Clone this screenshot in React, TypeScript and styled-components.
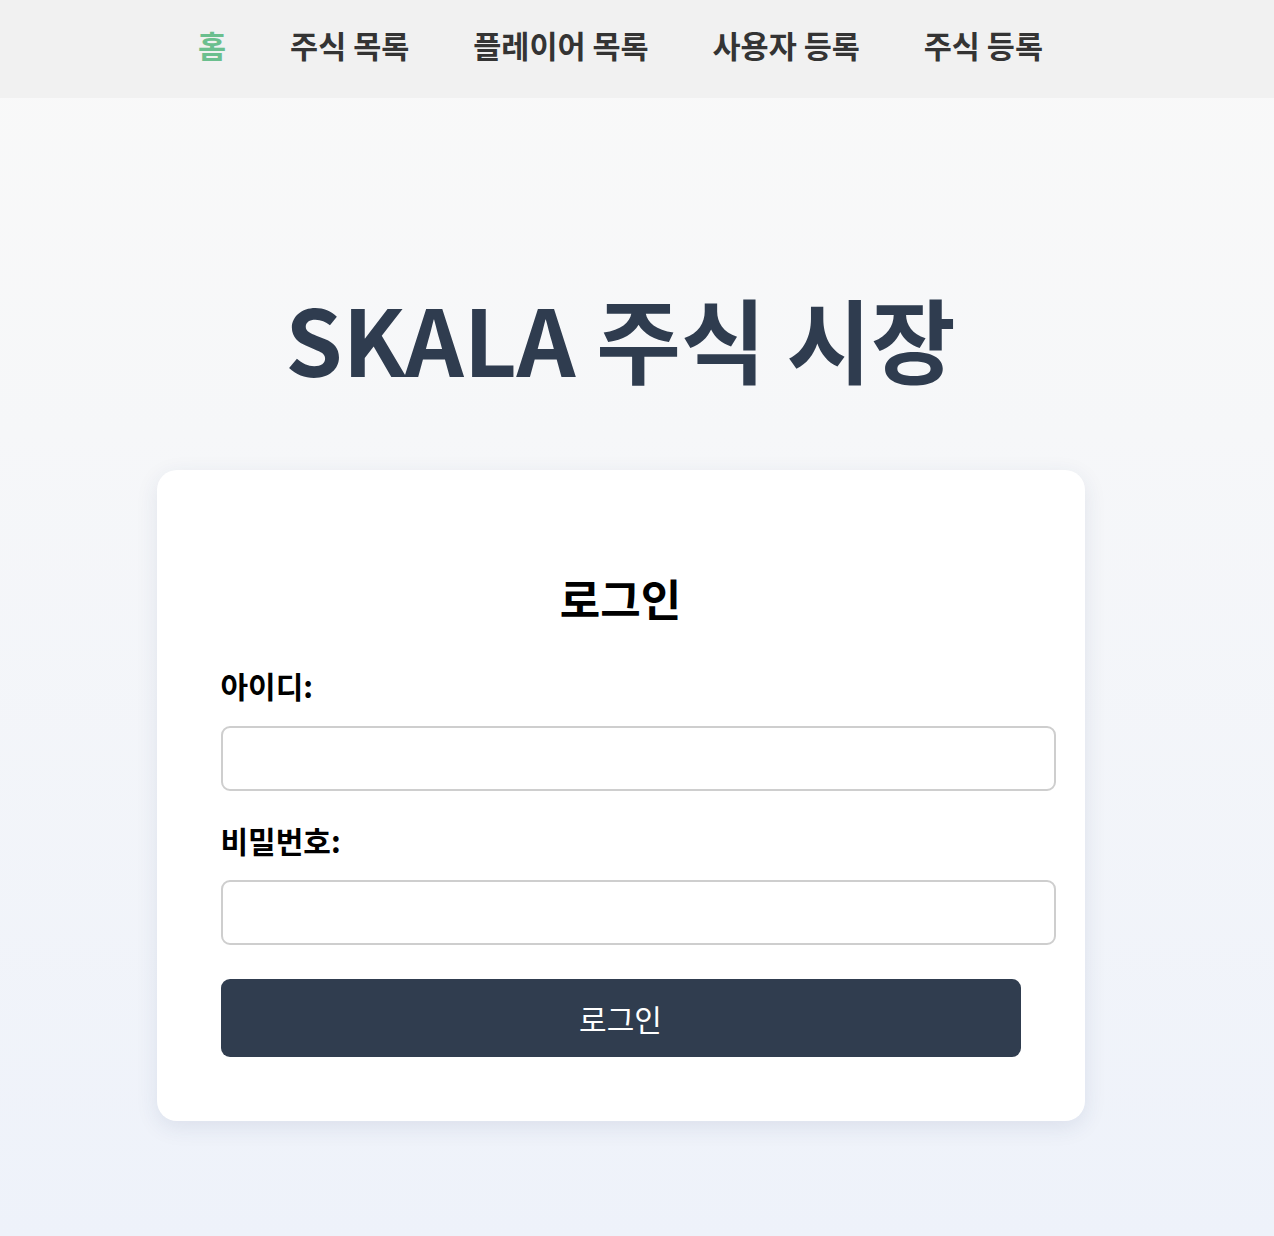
import React from "react";
import styled, { createGlobalStyle } from "styled-components";

const GlobalStyle = createGlobalStyle`
  html, body {
    margin: 0;
    padding: 0;
  }
  body {
    font-family: "Noto Sans CJK KR", "Noto Sans", sans-serif;
    background: linear-gradient(to bottom, #f9f9f9 0%, #f6f7f9 35%, #eef2fa 100%);
    min-height: 1236px;
  }
  * {
    font-family: "Noto Sans CJK KR", "Noto Sans", sans-serif;
  }
`;

const Page = styled.div`
  min-height: 1236px;
  display: flex;
  flex-direction: column;
`;

const NavBar = styled.nav`
  height: 98px;
  background: #f1f1f1;
  display: flex;
  align-items: center;
  justify-content: center;
  gap: 64px;
  padding-right: 33px;
  padding-bottom: 8px;
  box-sizing: border-box;
`;

const NavLink = styled.a<{ $active?: boolean }>`
  font-size: 30.5px;
  font-weight: 700;
  color: ${(p) => (p.$active ? "#6bbf8e" : "#343434")};
  text-decoration: none;
  cursor: pointer;
  line-height: 1.45;
`;

const Main = styled.main`
  display: flex;
  flex-direction: column;
  align-items: center;
  padding-right: 33px;
  padding-top: 172px;
`;

const Title = styled.h1`
  margin: 0 0 67px;
  font-size: 92px;
  font-weight: 700;
  color: #2f3c4f;
  line-height: 1.45;
`;

const Card = styled.div`
  width: 928px;
  box-sizing: border-box;
  background: #ffffff;
  border-radius: 20px;
  padding: 64px;
  box-shadow: 0 6px 22px rgba(40, 60, 110, 0.1);
`;

const CardTitle = styled.h2`
  margin: 33px 0 33px;
  text-align: center;
  font-size: 44px;
  font-weight: 700;
  color: #000;
  line-height: 1.45;
`;

const FormGroup = styled.div<{ $last?: boolean }>`
  margin-bottom: ${(p) => (p.$last ? "0" : "28px")};
`;

const Label = styled.label`
  display: block;
  font-size: 30px;
  font-weight: 700;
  color: #000;
  line-height: 1.45;
  margin-bottom: 18px;
`;

const Input = styled.input`
  display: block;
  box-sizing: content-box;
  width: 100%;
  height: 29px;
  padding: 16px 15.5px;
  border: 2px solid #cecece;
  border-radius: 9px;
  background: #fff;
  font-size: 20px;
  outline: none;
`;

const SubmitButton = styled.button`
  display: block;
  width: 100%;
  height: 78px;
  margin-top: 34px;
  border: none;
  border-radius: 9px;
  background: #303d4f;
  color: #ffffff;
  font-size: 30px;
  font-weight: 400;
  cursor: pointer;
`;

const Form = styled.form`
  display: block;
`;

export default function App() {
  const links = ["홈", "주식 목록", "플레이어 목록", "사용자 등록", "주식 등록"];
  return (
    <>
      <GlobalStyle />
      <Page>
        <NavBar>
          {links.map((l, i) => (
            <NavLink key={l} $active={i === 0}>
              {l}
            </NavLink>
          ))}
        </NavBar>
        <Main>
          <Title>SKALA 주식 시장</Title>
          <Card>
            <CardTitle>로그인</CardTitle>
            <Form onSubmit={(e) => e.preventDefault()}>
              <FormGroup>
                <Label htmlFor="userId">아이디:</Label>
                <Input id="userId" type="text" />
              </FormGroup>
              <FormGroup $last>
                <Label htmlFor="password">비밀번호:</Label>
                <Input id="password" type="password" />
              </FormGroup>
              <SubmitButton type="submit">로그인</SubmitButton>
            </Form>
          </Card>
        </Main>
      </Page>
    </>
  );
}
